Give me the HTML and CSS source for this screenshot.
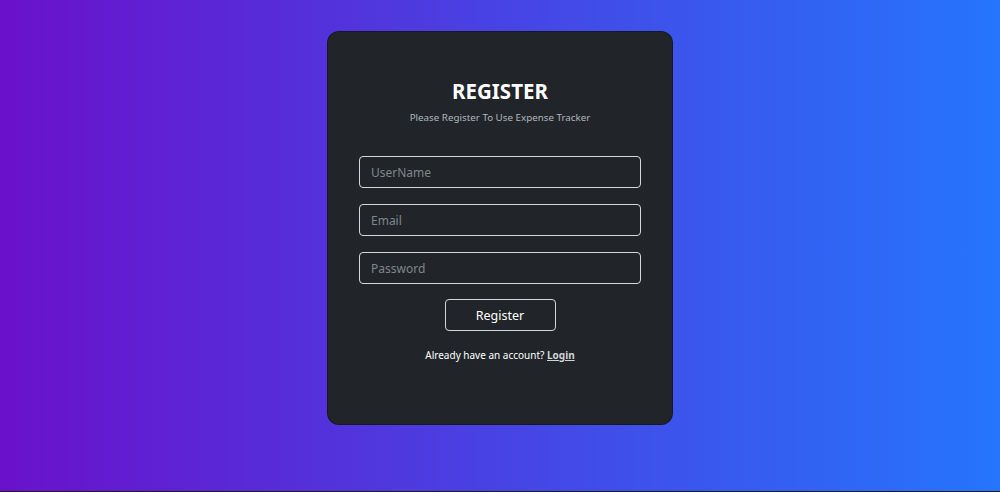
FILE: index.html
```html
<!DOCTYPE html>
<html>
	<head>
		<meta charset="UTF-8">
		<title>Register - Expense Tracker</title>
		<link rel="stylesheet" href="styles.css">
	</head>
	<body>
		<div class="page">
			<div class="card">
				<h2 class="title">REGISTER</h2>
				<p class="subtitle">Please Register To Use Expense Tracker</p>
				<form class="form">
					<input class="field" type="text" placeholder="UserName">
					<input class="field" type="email" placeholder="Email">
					<input class="field" type="password" placeholder="Password">
					<button class="btn" type="button">Register</button>
				</form>
				<p class="switch">Already have an account? <a href="javascript:;">Login</a></p>
			</div>
		</div>
	</body>
</html>
```

FILE: styles.css
```css
*{padding: 0;margin: 0;box-sizing: border-box;}
html{background: #1a1d21;}
body{font-family: "Noto Sans", "Open Sans", sans-serif;}
.page{
	height: 491px;
	background: linear-gradient(to right, #6a11cb, #2575fc);
	display: flex;
	justify-content: center;
	padding-top: 31px;
}
.card{
	width: 346px;height: 394px;
	background: #212529;
	border: 1px solid rgba(0,0,0,.3);
	border-radius: 12px;
	padding: 44px 31px 0;
	color: #fff;
	text-align: center;
}
.title{
	font-size: 20.5px;
	font-weight: 700;
	line-height: 30px;
}
.subtitle{
	font-size: 9.8px;
	color: #adb5bd;
	margin-top: 4px;
	line-height: 16px;
}
.form{
	display: flex;
	flex-direction: column;
	align-items: center;
	gap: 16px;
	margin-top: 30px;
}
.field{
	width: 282px;height: 32px;
	background: #212529;
	border: 1px solid #d4d7da;
	border-radius: 4px;
	padding: 0 11px;
	font-family: inherit;
	font-size: 12px;
	color: #fff;
	outline: none;
}
.field::placeholder{color: #7f868d;}
.btn{
	width: 111px;height: 32px;
	background: #212529;
	border: 1px solid #d4d7da;
	border-radius: 4px;
	color: #fff;
	font-family: inherit;
	font-size: 12.5px;
	margin-top: -1px;
}
.switch{
	font-size: 10px;
	margin-top: 16px;
	line-height: 16px;
}
.switch a{
	color: #d0d3d6;
	font-weight: 700;
}
```
